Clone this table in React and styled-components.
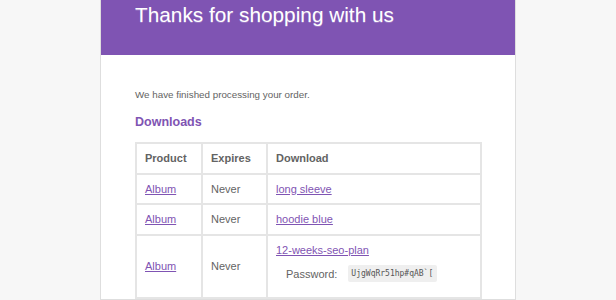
import React from "react";
import styled, { createGlobalStyle } from "styled-components";

const Global = createGlobalStyle`
  html, body { margin: 0; padding: 0; background: #f7f7f7; }
  body { font-family: "Liberation Sans", Arial, Helvetica, sans-serif; }
`;

const Page = styled.div`
  width: 616px;
  height: 300px;
  overflow: hidden;
  background: #f7f7f7;
`;

const Container = styled.div`
  width: 414px;
  margin: 0 auto;
  background: #ffffff;
  border: 1px solid #dedede;
  border-top: none;
`;

const Header = styled.div`
  background: #7f54b3;
  padding: 0 33px 25px 34px;
`;

const Title = styled.h1`
  margin: -1px 0 0;
  color: #ffffff;
  font-size: 20.8px;
  font-weight: 300;
  line-height: 31px;
  text-shadow: 0 1px 0 #9976c2;
`;

const Body = styled.div`
  padding: 33px 33px 0 34px;
  color: #636363;
`;

const Intro = styled.p`
  margin: 0 0 11px;
  font-size: 9.8px;
  line-height: 14.5px;
`;

const Heading = styled.h2`
  margin: 0 0 12.5px;
  color: #7f54b3;
  font-size: 12.5px;
  font-weight: bold;
  line-height: 16.25px;
`;

const Table = styled.table`
  width: 100%;
  border: 1px solid #e5e5e5;
  border-spacing: 0;
  border-collapse: separate;
  color: #636363;
  font-size: 11px;
  table-layout: fixed;
`;

const Th = styled.th`
  box-sizing: border-box;
  border: 1px solid #e5e5e5;
  padding: 8px;
  line-height: 12.5px;
  text-align: left;
  font-weight: bold;
  width: ${(p) => p.$w || "auto"};
`;

const Td = styled.td`
  border: 1px solid #e5e5e5;
  padding: 8px;
  line-height: 12.5px;
  text-align: left;
  vertical-align: middle;
`;

const Link = styled.a`
  color: #7f54b3;
  text-decoration: underline;
`;

const PasswordRow = styled.div`
  display: flex;
  align-items: center;
  gap: 11px;
  margin: 9px 0 7px 10px;
`;

const Code = styled.code`
  display: inline-block;
  background: #efefef;
  color: #555;
  font-family: "DejaVu Sans Mono", "Liberation Mono", monospace;
  font-size: 8px;
  line-height: 17px;
  padding: 0 4px 0 3px;
  border-radius: 2px;
`;

const rows = [
  { product: "Album", expires: "Never", file: "long sleeve" },
  { product: "Album", expires: "Never", file: "hoodie blue" },
  {
    product: "Album",
    expires: "Never",
    file: "12-weeks-seo-plan",
    password: "UjgWqRr51hp#qAB`[",
  },
];

export default function App() {
  return (
    <Page>
      <Global />
      <Container>
        <Header>
          <Title>Thanks for shopping with us</Title>
        </Header>
        <Body>
          <Intro>We have finished processing your order.</Intro>
          <Heading>Downloads</Heading>
          <Table>
            <thead>
              <tr>
                <Th $w="66px">Product</Th>
                <Th $w="65px">Expires</Th>
                <Th>Download</Th>
              </tr>
            </thead>
            <tbody>
              {rows.map((r, i) => (
                <tr key={i}>
                  <Td>
                    <Link href="#">{r.product}</Link>
                  </Td>
                  <Td>{r.expires}</Td>
                  <Td>
                    <Link href="#">{r.file}</Link>
                    {r.password && (
                      <PasswordRow>
                        <span>Password:</span>
                        <Code>{r.password}</Code>
                      </PasswordRow>
                    )}
                  </Td>
                </tr>
              ))}
            </tbody>
          </Table>
        </Body>
      </Container>
    </Page>
  );
}
